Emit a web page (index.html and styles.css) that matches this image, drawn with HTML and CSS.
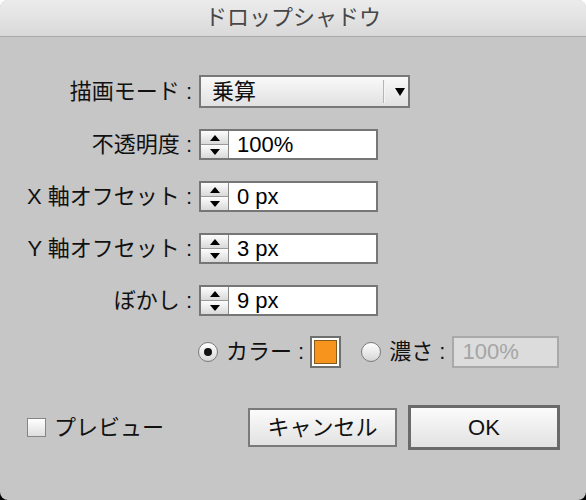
FILE: index.html
```html
<!DOCTYPE html>
<html lang="ja">
<head>
<meta charset="utf-8">
<title>ドロップシャドウ</title>
<link rel="stylesheet" href="styles.css">
</head>
<body>
<div class="dialog">
  <div class="titlebar">ドロップシャドウ</div>
  <div class="form">
    <div class="lbl">描画モード :</div>
    <div class="select">
      <span class="sel-val">乗算</span>
      <span class="sel-sep"></span>
      <span class="sel-arrow"></span>
    </div>

    <div class="lbl">不透明度 :</div>
    <div class="field">
      <div class="spin"><span class="up"></span><span class="down"></span></div>
      <span class="val">100%</span>
    </div>

    <div class="lbl">X 軸オフセット :</div>
    <div class="field">
      <div class="spin"><span class="up"></span><span class="down"></span></div>
      <span class="val">0 px</span>
    </div>

    <div class="lbl">Y 軸オフセット :</div>
    <div class="field">
      <div class="spin"><span class="up"></span><span class="down"></span></div>
      <span class="val">3 px</span>
    </div>

    <div class="lbl">ぼかし :</div>
    <div class="field">
      <div class="spin"><span class="up"></span><span class="down"></span></div>
      <span class="val">9 px</span>
    </div>
  </div>

  <div class="colorrow">
    <span class="radio checked"></span>
    <span class="rlabel">カラー :</span>
    <span class="swatch"><span class="swatch-fill"></span></span>
    <span class="radio second"></span>
    <span class="rlabel">濃さ :</span>
    <span class="disabled-field">100%</span>
  </div>

  <div class="footer">
    <span class="checkbox"></span>
    <span class="cblabel">プレビュー</span>
    <span class="spacer"></span>
    <button class="btn cancel">キャンセル</button>
    <button class="btn ok">OK</button>
  </div>
</div>
</body>
</html>
```

FILE: styles.css
```css
html, body {
  margin: 0;
  padding: 0;
}
body {
  width: 586px;
  height: 500px;
  background: linear-gradient(#ffffff 50%, #000000 50%);
  font-family: "Liberation Sans", "Noto Sans CJK JP", sans-serif;
  font-size: 22px;
  color: #111;
}
.dialog {
  width: 586px;
  height: 500px;
  background: #c6c6c6;
  border-radius: 8px;
  overflow: hidden;
}
.titlebar {
  height: 36px;
  line-height: 36px;
  text-align: center;
  color: #474747;
  font-size: 22px;
  background: linear-gradient(#ececec, #d9d9d9);
  border-bottom: 1px solid #a9a9a9;
}
.form {
  display: grid;
  grid-template-columns: 192px auto;
  column-gap: 7px;
  row-gap: 21px;
  margin-top: 38px;
  align-items: center;
  justify-items: start;
}
.lbl {
  justify-self: end;
  white-space: nowrap;
  line-height: 26px;
}
.select {
  width: 211px;
  height: 33px;
  box-sizing: border-box;
  border: 2px solid #787878;
  background: linear-gradient(#f9f9f9, #e1e1e1);
  display: flex;
  align-items: center;
}
.sel-val {
  flex: 1;
  padding-left: 11px;
  line-height: 26px;
}
.sel-sep {
  width: 1px;
  height: 23px;
  background: #b5b5b5;
  border-right: 1px solid #f4f4f4;
}
.sel-arrow {
  width: 0;
  height: 0;
  margin: 0 3px 0 10px;
  border-left: 5px solid transparent;
  border-right: 5px solid transparent;
  border-top: 8px solid #000;
}
.field {
  width: 179px;
  height: 31px;
  box-sizing: border-box;
  border: 2px solid #767676;
  background: #fff;
  display: flex;
  align-items: stretch;
}
.spin {
  width: 27px;
  display: flex;
  flex-direction: column;
  border-right: 1px solid #8a8a8a;
}
.spin span {
  flex: 1;
  background: linear-gradient(#fdfdfd, #d9d9d9);
  display: flex;
  align-items: center;
  justify-content: center;
}
.spin .up {
  border-bottom: 1px solid #9a9a9a;
}
.spin .up::before {
  content: "";
  border-left: 5px solid transparent;
  border-right: 5px solid transparent;
  border-bottom: 6px solid #000;
}
.spin .down::before {
  content: "";
  border-left: 5px solid transparent;
  border-right: 5px solid transparent;
  border-top: 6px solid #000;
}
.val {
  padding-left: 8px;
  line-height: 27px;
  color: #000;
}
.colorrow {
  display: flex;
  align-items: center;
  margin-top: 20px;
  padding-left: 198px;
  height: 32px;
}
.radio {
  width: 20px;
  height: 20px;
  box-sizing: border-box;
  border-radius: 50%;
  border: 1px solid #7a7a7a;
  background: linear-gradient(#ffffff, #d6d6d6);
  display: flex;
  align-items: center;
  justify-content: center;
  flex: none;
}
.radio.checked::before {
  content: "";
  width: 8px;
  height: 8px;
  border-radius: 50%;
  background: #111;
}
.radio.second {
  margin-left: 20px;
}
.rlabel {
  margin-left: 8px;
  line-height: 26px;
  white-space: nowrap;
}
.swatch {
  margin-left: 6px;
  width: 31px;
  height: 32px;
  box-sizing: border-box;
  border: 2px solid #6f6f6f;
  background: #fff;
  padding: 2px;
  display: flex;
}
.swatch-fill {
  flex: 1;
  background: #f7941e;
  border: 1px solid #8a5a1a;
}
.disabled-field {
  margin-left: 7px;
  width: 107px;
  height: 32px;
  box-sizing: border-box;
  border: 2px solid #a9a9a9;
  background: #dcdcdc;
  color: #a5a5a5;
  padding-left: 8px;
  line-height: 28px;
}
.footer {
  display: flex;
  align-items: center;
  margin-top: 37px;
  padding-left: 27px;
  padding-right: 26px;
  height: 45px;
}
.checkbox {
  width: 19px;
  height: 19px;
  box-sizing: border-box;
  border: 1px solid #858585;
  background: linear-gradient(#ffffff, #dedede);
}
.cblabel {
  margin-left: 8px;
  line-height: 26px;
}
.spacer {
  flex: 1;
}
.btn {
  font: inherit;
  color: #111;
  box-sizing: border-box;
  background: linear-gradient(#fbfbfb, #e2e2e2);
  padding: 0;
  margin: 0;
  line-height: 26px;
  border-radius: 0;
}
.cancel {
  width: 149px;
  height: 39px;
  border: 2px solid #7a7a7a;
}
.ok {
  margin-left: 11px;
  width: 152px;
  height: 45px;
  border: 3px solid #6a6a6a;
}
```
